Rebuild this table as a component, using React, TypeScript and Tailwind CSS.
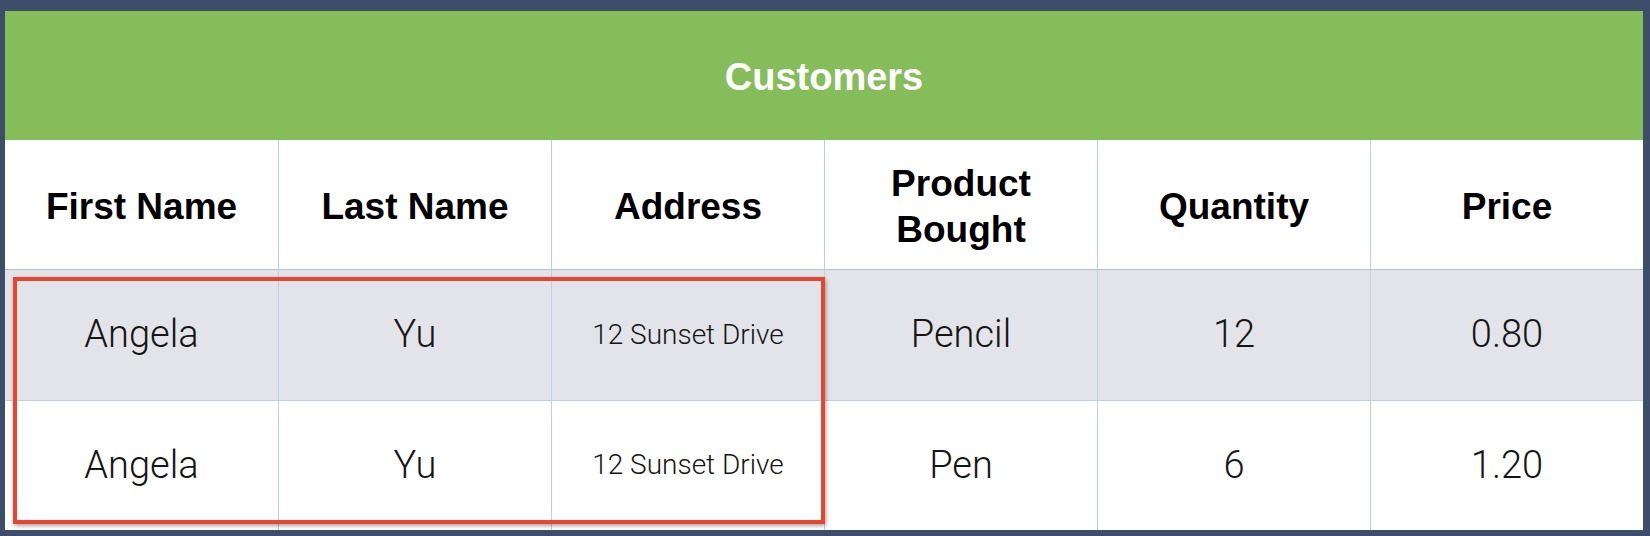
const headers = ["First Name", "Last Name", "Address", "Product\nBought", "Quantity", "Price"]

const rows = [
  { first: "Angela", last: "Yu", address: "12 Sunset Drive", product: "Pencil", qty: "12", price: "0.80" },
  { first: "Angela", last: "Yu", address: "12 Sunset Drive", product: "Pen", qty: "6", price: "1.20" },
]

function Cell({ children, first, className = "" }: { children: React.ReactNode; first?: boolean; className?: string }) {
  return (
    <div
      className={
        "flex items-center justify-center text-center " +
        (first ? "" : "border-l border-[#bcd2e2] ") +
        className
      }
    >
      {children}
    </div>
  )
}

export default function App() {
  return (
    <div className="h-[536px] w-[1650px] bg-[#3d4e6b] pt-[11px] pr-[7px] pb-[6px] pl-[5px]">
      <div className="relative flex h-full flex-col bg-white font-['Liberation_Sans',Arial,sans-serif]">
        <div className="flex h-[129px] items-center justify-center bg-[#85bd5a] pt-[3px]">
          <h1 className="text-[38px] font-bold text-white">Customers</h1>
        </div>

        <div className="grid h-[130px] grid-cols-6 border-b border-[#b3c2cf]">
          {headers.map((h, i) => (
            <Cell key={h} first={i === 0} className="pt-[4px]">
              <span className="whitespace-pre-line text-[37px] font-bold leading-[46px] text-black">{h}</span>
            </Cell>
          ))}
        </div>

        {rows.map((r, i) => (
          <div
            key={i}
            className={
              "grid flex-1 grid-cols-6 font-['Roboto',sans-serif] font-light text-[#151515] " +
              (i === 0 ? "border-b border-[#bcd2e2] bg-[#e3e4e9]" : "bg-white")
            }
          >
            <Cell first>
              <span className="text-[38px]">{r.first}</span>
            </Cell>
            <Cell>
              <span className="text-[38px]">{r.last}</span>
            </Cell>
            <Cell>
              <span className="text-[28px]">{r.address}</span>
            </Cell>
            <Cell>
              <span className="text-[38px]">{r.product}</span>
            </Cell>
            <Cell>
              <span className="text-[38px]">{r.qty}</span>
            </Cell>
            <Cell>
              <span className="text-[38px]">{r.price}</span>
            </Cell>
          </div>
        ))}

        {/* highlight around the first three columns */}
        <div className="pointer-events-none absolute top-[266px] left-[8px] h-[247px] w-[812px] border-[4px] border-[#e8442e] shadow-[1px_2px_4px_rgba(0,0,0,0.35)]" />
      </div>
    </div>
  )
}
